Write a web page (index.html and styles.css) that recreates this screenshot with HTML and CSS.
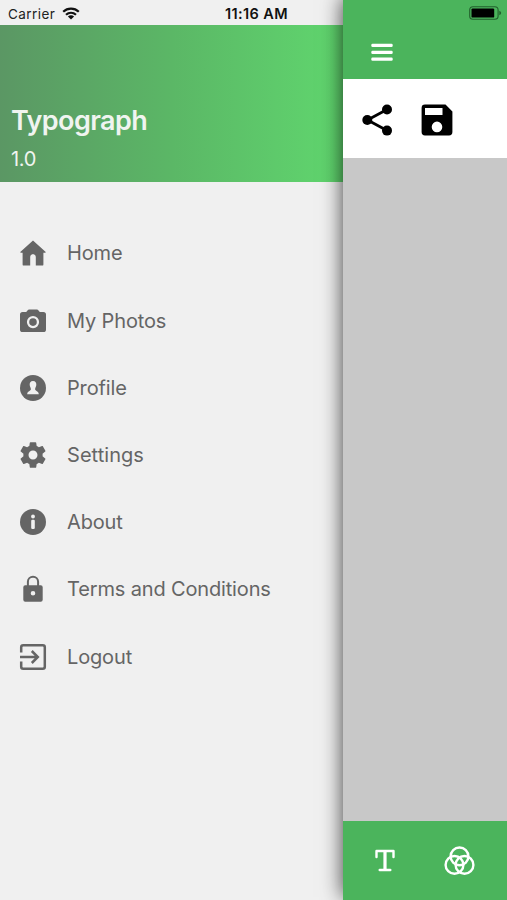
FILE: index.html
```html
<!DOCTYPE html>
<html lang="en">
<head>
<meta charset="utf-8">
<title>Typograph</title>
<link rel="stylesheet" href="styles.css">
</head>
<body>
<div class="screen">
  <aside class="drawer">
    <div class="status">
      <span class="carrier">Carrier</span>
      <svg class="wifi" width="18" height="13" viewBox="0 0 18 13" fill="none" stroke="#111" stroke-width="2.2"><path d="M1.2 4.8C5.6.6 12.4.6 16.8 4.8M4 7.8C6.9 5.1 11.1 5.1 14 7.8"/><path d="M5.9 9.4C7.7 7.8 10.3 7.8 12.1 9.4L9 12.5Z" fill="#111" stroke="none"/></svg>
      <span class="time">11:16 AM</span>
    </div>
    <header class="brand">
      <h1 class="title">Typograph</h1>
      <p class="version">1.0</p>
    </header>
    <nav class="menu">
      <a class="item"><svg class="icon" viewBox="0 0 28 28"><path d="M14 1.5 27 13.2 25.8 13.8H24.4V25.4Q24.4 26.6 23.2 26.6H16.8V18C16.8 14.3 11.2 14.3 11.2 18V26.6H4.8Q3.6 26.6 3.6 25.4V13.8H2.2L1 13.2Z"/></svg><span class="label home">Home</span></a>
      <a class="item"><svg class="icon" viewBox="0 0 28 28"><path fill-rule="evenodd" d="M10 2.5H18Q18.8 2.5 19.3 3.2L20.8 5H24.4Q27 5 27 7.6V22.4Q27 25 24.4 25H3.6Q1 25 1 22.4V7.6Q1 5 3.6 5H7.2L8.7 3.2Q9.2 2.5 10 2.5ZM14 9A6.1 6.1 0 1 0 14 21.2 6.1 6.1 0 1 0 14 9Z"/><circle cx="14" cy="15.1" r="3.8"/></svg><span class="label photos">My Photos</span></a>
      <a class="item"><svg class="icon" viewBox="0 0 28 28"><circle cx="14" cy="14" r="13"/><path class="cut" d="M14 7C16.5 7 17.5 8.7 17.3 11.1 17.1 13.2 16.1 13.8 16.1 15.2 16.1 17.1 19.8 16.7 19.8 20.3H8.2C8.2 16.7 11.9 17.1 11.9 15.2 11.9 13.8 10.9 13.2 10.7 11.1 10.5 8.7 11.5 7 14 7Z"/></svg><span class="label profile">Profile</span></a>
      <a class="item"><svg class="icon" viewBox="0 0 24 24"><path transform="translate(12 12) scale(1.1) translate(-12 -12)" d="M19.43 12.98c.04-.32.07-.64.07-.98s-.03-.66-.07-.98l2.11-1.65c.19-.15.24-.42.12-.64l-2-3.46c-.12-.22-.39-.3-.61-.22l-2.49 1c-.52-.4-1.08-.73-1.69-.98l-.38-2.65C14.46 2.18 14.25 2 14 2h-4c-.25 0-.46.18-.49.42l-.38 2.65c-.61.25-1.17.59-1.69.98l-2.49-1c-.23-.09-.49 0-.61.22l-2 3.46c-.13.22-.07.49.12.64l2.11 1.65c-.04.32-.07.65-.07.98s.03.66.07.98l-2.11 1.65c-.19.15-.24.42-.12.64l2 3.46c.12.22.39.3.61.22l2.49-1c.52.4 1.08.73 1.69.98l.38 2.65c.03.24.24.42.49.42h4c.25 0 .46-.18.49-.42l.38-2.65c.61-.25 1.17-.59 1.69-.98l2.49 1c.23.09.49 0 .61-.22l2-3.46c.12-.22.07-.49-.12-.64l-2.11-1.65zM12 15.5c-1.93 0-3.5-1.57-3.5-3.5s1.57-3.5 3.5-3.5 3.5 1.57 3.5 3.5-1.57 3.5-3.5 3.5z"/></svg><span class="label settings">Settings</span></a>
      <a class="item"><svg class="icon" viewBox="0 0 28 28"><circle cx="14" cy="14" r="13"/><circle class="cut" cx="14" cy="8.5" r="1.9"/><rect class="cut" x="12.2" y="11.8" width="3.6" height="9.2" rx="1.2"/></svg><span class="label about">About</span></a>
      <a class="item"><svg class="icon" viewBox="0 0 28 28"><path d="M8.9 11V6.8A5.1 5.1 0 0 1 19.1 6.8V11" fill="none" stroke="#656565" stroke-width="2"/><path fill-rule="evenodd" d="M6.3 10.2H21.7Q23.7 10.2 23.7 12.2V24.7Q23.7 26.7 21.7 26.7H6.3Q4.3 26.7 4.3 24.7V12.2Q4.3 10.2 6.3 10.2ZM14 15.9A2.3 2.3 0 1 0 14 20.5 2.3 2.3 0 1 0 14 15.9Z"/></svg><span class="label terms">Terms and Conditions</span></a>
      <a class="item"><svg class="icon outline" viewBox="0 0 28 28"><path d="M2.2 9.5V4.2Q2.2 2.2 4.2 2.2H23.8Q25.8 2.2 25.8 4.2V23.8Q25.8 25.8 23.8 25.8H4.2Q2.2 25.8 2.2 23.8V18.5"/><path d="M1 14H18.5M12.8 8 18.8 14 12.8 20"/></svg><span class="label logout">Logout</span></a>
    </nav>
  </aside>
  <main class="page">
    <header class="topbar">
      <svg class="battery" width="34" height="14" viewBox="0 0 34 14"><rect x=".7" y=".7" width="28.4" height="12.6" rx="3.3" fill="none" stroke="#22602c" stroke-width="1.1"/><rect x="2.5" y="2.4" width="22.7" height="9.2" rx="1.2"/><path d="M30.3 4.7Q32.2 5.5 32.2 7T30.3 9.3Z" fill="#22602c"/></svg>
      <svg class="burger" width="22" height="19" viewBox="0 0 22 19" fill="#fff"><rect x=".3" y=".8" width="21.4" height="3.2" rx="1.2"/><rect x=".3" y="7.7" width="21.4" height="3.2" rx="1.2"/><rect x=".3" y="14.6" width="21.4" height="3.2" rx="1.2"/></svg>
    </header>
    <div class="tools">
      <svg width="32" height="32" viewBox="0 0 32 32"><path d="M25 5.5 5.5 16 25 26.6" fill="none" stroke="#000" stroke-width="2.8"/><circle cx="25" cy="5.5" r="5"/><circle cx="5.3" cy="16" r="5"/><circle cx="25" cy="26.6" r="5"/></svg>
      <svg width="32" height="32" viewBox="0 0 32 32"><path fill-rule="evenodd" d="M4 .6H24.5L31.4 7.4V28Q31.4 31.4 28 31.4H4Q.6 31.4.6 28V4Q.6.6 4 .6ZM4 4V11H21.5V4ZM16 17.6A5.3 5.3 0 1 0 16 28.2 5.3 5.3 0 1 0 16 17.6Z"/></svg>
    </div>
    <div class="canvas"></div>
    <footer class="bottombar">
      <svg width="20" height="23" viewBox="0 0 20 23" fill="none" stroke="#fff" stroke-linecap="round" stroke-linejoin="round"><path d="M1.5 8V2H18.5V8M4.7 21H15.3" stroke-width="2.4"/><path d="M10 2V21" stroke-width="3.2" stroke-linecap="butt"/></svg>
      <svg width="31" height="30" viewBox="0 0 31 30" fill="none" stroke="#fff" stroke-width="2.4"><circle cx="15.5" cy="10.4" r="8.9"/><circle cx="10.5" cy="18.9" r="8.9"/><circle cx="20.5" cy="18.9" r="8.9"/></svg>
    </footer>
  </main>
</div>
</body>
</html>
```

FILE: styles.css
```css
* { box-sizing: border-box; }
body { margin: 0; font-family: Inter, "Liberation Sans", sans-serif; }
.screen { display: flex; width: 507px; height: 900px; overflow: hidden; background: #f0f0f0; }
.drawer { width: 343px; flex: none; }
.status { display: flex; align-items: center; height: 25px; padding: 2px 0 0 8px; font-size: 13.5px; color: #222; }
.carrier { width: 48px; letter-spacing: 0.45px; }
.wifi { margin-left: 6px; }
.time { margin-left: 145px; font-weight: 600; font-size: 14.5px; letter-spacing: 0.4px; white-space: nowrap; color: #111; }
.brand { height: 157px; padding: 79px 0 0 11px; background: linear-gradient(90deg, #5b9764 0%, #5bb766 50%, #60d66e 100%); color: #f0f4f0; }
.title { margin: 0; font-size: 27px; line-height: 34px; font-weight: 600; letter-spacing: -0.6px; }
.version { margin: 8px 0 0; font-size: 20px; line-height: 26px; letter-spacing: -0.3px; }
.menu { display: flex; flex-direction: column; padding-top: 37.9px; }
.item { display: flex; align-items: center; height: 67.2px; padding-left: 19px; gap: 20px; color: #656565; font-size: 20px; }
.icon { width: 28px; height: 28px; flex: none; fill: #656565; }
.outline { fill: none; stroke: #656565; stroke-width: 2.5; }
.cut { fill: #f0f0f0; }
.label { white-space: nowrap; letter-spacing: -0.15px; }
.settings { letter-spacing: 0.05px; }
.page { display: flex; flex-direction: column; width: 164px; height: 900px; box-shadow: 0 -3px 20px rgba(0, 0, 0, 0.75); }
.topbar { display: flex; flex-direction: column; height: 79px; padding: 6px 5px 0 28px; background: #4bb45c; }
.battery { align-self: flex-end; margin-right: -1px; }
.burger { margin-top: 23px; }
.tools { display: flex; align-items: center; gap: 27px; height: 79px; padding: 3px 0 0 19px; background: #fff; }
.canvas { flex: 1; background: #c8c8c8; }
.bottombar { display: flex; align-items: center; gap: 49px; height: 79px; padding-left: 32px; background: #4bb45c; }
```
